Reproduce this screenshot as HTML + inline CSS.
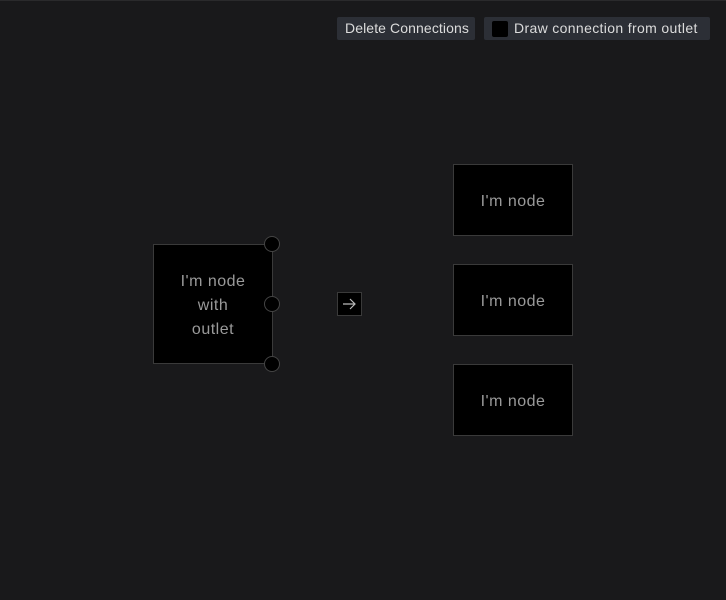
<!DOCTYPE html>
<html><head><style>
body{margin:0;width:726px;height:600px;background:#19191b;font-family:"Liberation Sans",sans-serif;position:relative;overflow:hidden}
.top{position:absolute;left:0;top:0;width:726px;height:1px;background:#2a2a2c}
.btn{position:absolute;top:17px;height:23px;background:#2c2f36;border-radius:2px;color:#dcdcdc;font-size:14px;line-height:23px;box-sizing:border-box;letter-spacing:0.35px}
.node{position:absolute;background:#000;border:1px solid #3a3a3a;box-sizing:border-box;color:#9a9a9a;font-size:16px;display:flex;align-items:center;justify-content:center;text-align:center;line-height:24px;letter-spacing:0.5px;padding-top:3px}
.dot{position:absolute;width:16px;height:16px;border-radius:50%;background:#000;border:1px solid #444;box-sizing:border-box}
</style></head><body>
<div class="top"></div>
<div class="btn" style="left:337px;width:138px;padding-left:8px;letter-spacing:0.1px">Delete Connections</div>
<div class="btn" style="left:484px;width:226px;padding-left:30px"><span style="position:absolute;left:8px;top:4px;width:16px;height:16px;background:#000;border-radius:2px"></span>Draw connection from outlet</div>
<div class="node" style="left:153px;top:244px;width:120px;height:120px">I'm node<br>with<br>outlet</div>
<div class="dot" style="left:264px;top:236px"></div>
<div class="dot" style="left:264px;top:296px"></div>
<div class="dot" style="left:264px;top:356px"></div>
<div style="position:absolute;left:337px;top:292px;width:25px;height:24px;background:#000;border:1px solid #3a3a3a;box-sizing:border-box">
<svg width="23" height="22" viewBox="0 0 23 22"><path d="M5 11H17M12 6L17 11L12 16" stroke="#bbb" stroke-width="1.2" fill="none"/></svg></div>
<div class="node" style="left:453px;top:164px;width:120px;height:72px">I'm node</div>
<div class="node" style="left:453px;top:264px;width:120px;height:72px">I'm node</div>
<div class="node" style="left:453px;top:364px;width:120px;height:72px">I'm node</div>
</body></html>
